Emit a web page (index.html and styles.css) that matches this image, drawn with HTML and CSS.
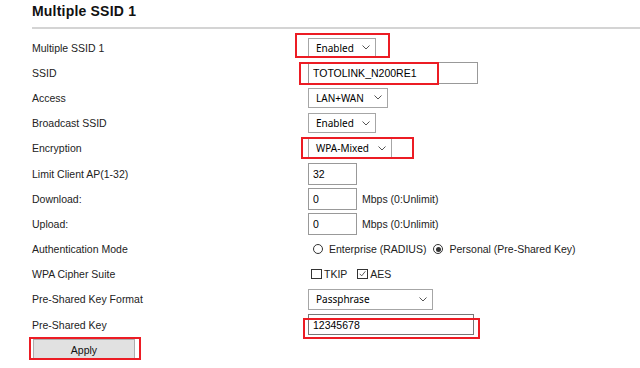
FILE: index.html
```html
<!DOCTYPE html>
<html lang="en">
<head>
    <meta charset="UTF-8">
    <meta name="viewport" content="width=device-width, initial-scale=1.0">
    <title>Multiple SSID 1</title>
    <link rel="stylesheet" href="styles.css">
</head>
<body>

<div class="page">
    <h1 class="title">Multiple SSID 1</h1>

    <div class="form">
        <div class="label">Multiple SSID 1</div>
        <div class="field">
            <span class="mark">
                <span class="select sel-enabled"><span>Enabled</span><svg class="chev" viewBox="0 0 8 5"><path d="M0.5 0.5 L4 4 L7.5 0.5"/></svg></span>
                <i class="hl hl-enabled"></i>
            </span>
        </div>

        <div class="label">SSID</div>
        <div class="field">
            <span class="mark">
                <input class="text ssid" type="text" value="TOTOLINK_N200RE1">
                <i class="hl hl-ssid"></i>
            </span>
        </div>

        <div class="label">Access</div>
        <div class="field">
            <span class="select sel-access"><span>LAN+WAN</span><svg class="chev" viewBox="0 0 8 5"><path d="M0.5 0.5 L4 4 L7.5 0.5"/></svg></span>
        </div>

        <div class="label">Broadcast SSID</div>
        <div class="field">
            <span class="select sel-enabled"><span>Enabled</span><svg class="chev" viewBox="0 0 8 5"><path d="M0.5 0.5 L4 4 L7.5 0.5"/></svg></span>
        </div>

        <div class="label">Encryption</div>
        <div class="field">
            <span class="mark">
                <span class="select sel-enc"><span>WPA-Mixed</span><svg class="chev" viewBox="0 0 8 5"><path d="M0.5 0.5 L4 4 L7.5 0.5"/></svg></span>
                <i class="hl hl-enc"></i>
            </span>
        </div>

        <div class="label">Limit Client AP(1-32)</div>
        <div class="field">
            <input class="text short" type="text" value="32">
        </div>

        <div class="label">Download:</div>
        <div class="field">
            <input class="text short" type="text" value="0">
            <span class="note">Mbps (0:Unlimit)</span>
        </div>

        <div class="label">Upload:</div>
        <div class="field">
            <input class="text short" type="text" value="0">
            <span class="note">Mbps (0:Unlimit)</span>
        </div>

        <div class="label">Authentication Mode</div>
        <div class="field radios">
            <span class="radio"></span><span class="opt">Enterprise (RADIUS)</span>
            <span class="radio checked"></span><span class="opt">Personal (Pre-Shared Key)</span>
        </div>

        <div class="label">WPA Cipher Suite</div>
        <div class="field checks">
            <span class="check"></span><span class="opt">TKIP</span>
            <span class="check checked"><svg viewBox="0 0 10 10"><path d="M1.5 4.8 L4 7.3 L8.6 1.6"/></svg></span><span class="opt">AES</span>
        </div>

        <div class="label">Pre-Shared Key Format</div>
        <div class="field">
            <span class="select sel-format"><span>Passphrase</span><svg class="chev" viewBox="0 0 8 5"><path d="M0.5 0.5 L4 4 L7.5 0.5"/></svg></span>
        </div>

        <div class="label">Pre-Shared Key</div>
        <div class="field">
            <span class="mark">
                <input class="text psk" type="text" value="12345678">
                <i class="hl hl-psk"></i>
            </span>
        </div>

        <div class="actions">
            <span class="mark">
                <button class="apply">Apply</button>
                <i class="hl hl-apply"></i>
            </span>
        </div>
    </div>
</div>

</body>
</html>
```

FILE: styles.css
```css
body {
    margin: 0;
    font-family: "Liberation Sans", Arial, sans-serif;
    color: #222;
    background: #fff;
}

.page {
    padding-left: 32px;
}

.title {
    margin: 3px 0 0;
    font-size: 14px;
    line-height: 16px;
    font-weight: bold;
    letter-spacing: 0.2px;
    color: #111;
    padding-bottom: 8px;
    border-bottom: 2px solid #d4d4d4;
}

.form {
    display: grid;
    grid-template-columns: 276px 1fr;
    grid-auto-rows: 25.2px;
    align-items: center;
    margin-top: 6px;
}

.label {
    font-size: 10.5px;
}

.field {
    display: flex;
    align-items: center;
}

.mark {
    position: relative;
    display: inline-flex;
}

/* red highlight boxes drawn over the controls */
.hl {
    position: absolute;
    border: 2px solid #ec1c24;
    pointer-events: none;
}

.hl-enabled {
    left: -13px;
    right: -14px;
    top: -5px;
    bottom: 0;
}

.hl-ssid {
    left: -9px;
    width: 136px;
    top: 0;
    bottom: -1px;
}

.hl-enc {
    left: -7px;
    right: -22px;
    top: -1px;
    bottom: -1px;
}

.hl-psk {
    left: -5px;
    right: -6px;
    top: 4px;
    bottom: -4px;
}

.hl-apply {
    left: -4px;
    right: -6px;
    top: -2px;
    bottom: 0;
}

.select {
    display: flex;
    align-items: center;
    justify-content: space-between;
    box-sizing: border-box;
    height: 20px;
    padding: 0 5px 0 7px;
    border: 1px solid #a6a6a6;
    background: #fff;
    font-family: "Noto Sans", sans-serif;
    font-size: 10px;
    color: #000;
}

.chev {
    width: 8px;
    height: 5px;
    fill: none;
    stroke: #555;
    stroke-width: 1;
}

.sel-enabled {
    width: 68px;
}

.sel-access {
    width: 80px;
}

.sel-enc {
    width: 84px;
}

.sel-format {
    width: 125px;
    height: 21px;
}

.text {
    box-sizing: border-box;
    height: 22px;
    margin: 0;
    padding: 0 4px;
    border: 1px solid #999;
    font-family: "Liberation Sans", Arial, sans-serif;
    font-size: 10.5px;
    color: #000;
    outline: none;
}

.ssid {
    width: 170px;
}

.short {
    width: 49px;
}

.psk {
    width: 166px;
    height: 21px;
    border-color: #777;
}

.note {
    margin-left: 5px;
    font-size: 10.5px;
}

.opt {
    font-size: 10.5px;
}

.radio {
    box-sizing: border-box;
    width: 10px;
    height: 10px;
    border: 1px solid #333;
    border-radius: 50%;
    margin: 0 6px 0 5px;
    display: flex;
    align-items: center;
    justify-content: center;
}

.radio.checked {
    margin-left: 7px;
}

.radio.checked::after {
    content: "";
    width: 5px;
    height: 5px;
    border-radius: 50%;
    background: #333;
}

.check {
    box-sizing: border-box;
    width: 11px;
    height: 10px;
    border: 1px solid #333;
    margin: 0 2px 0 3px;
    display: flex;
}

.check.checked {
    margin-left: 10px;
}

.check svg {
    width: 9px;
    height: 8px;
    fill: none;
    stroke: #333;
    stroke-width: 1;
}

.actions {
    grid-column: 1;
    padding-left: 1px;
}

.apply {
    width: 102px;
    height: 21px;
    margin: 0;
    border: 1px solid #adadad;
    background: #e1e1e1;
    font-family: "Liberation Sans", Arial, sans-serif;
    font-size: 10.5px;
    color: #111;
}
```
